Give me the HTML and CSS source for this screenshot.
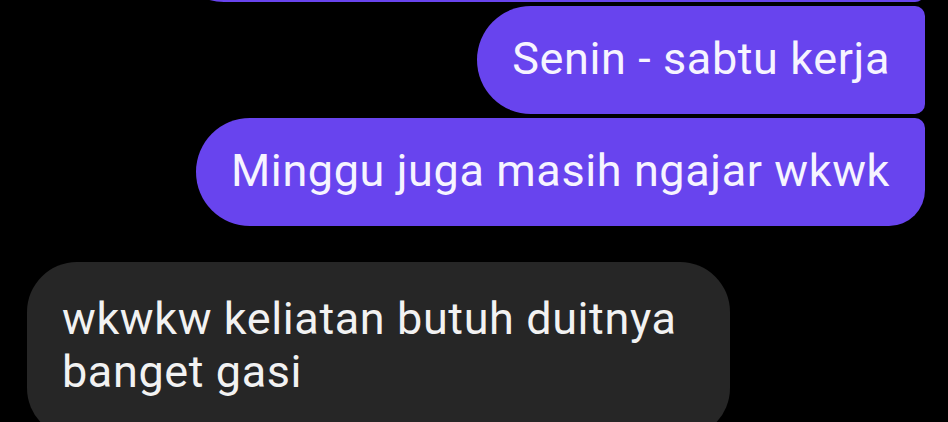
FILE: index.html
```html
<!DOCTYPE html>
<html lang="en">
<head>
  <meta charset="UTF-8">
  <title>Chat</title>
  <link rel="stylesheet" href="styles.css">
</head>
<body>
  <div class="chat">
    <div class="group sent">
      <div class="bubble cut"></div>
      <div class="bubble">Senin - sabtu kerja</div>
      <div class="bubble last">Minggu juga masih ngajar wkwk</div>
    </div>

    <div class="group received">
      <div class="bubble">wkwkw keliatan butuh duitnya<br>banget gasi</div>
    </div>
  </div>
</body>
</html>
```

FILE: styles.css
```css
body {
  margin: 0;
  background: #000;
  font-family: Roboto, "Noto Sans", sans-serif;
  overflow: hidden;
  height: 100vh;
}
.chat {
  display: flex;
  flex-direction: column;
  gap: 36px;
  padding: 0 23px 0 27px;
}
.group {
  display: flex;
  flex-direction: column;
  gap: 4px;
}
.sent { align-items: flex-end; }
.received { align-items: flex-start; }
.bubble {
  font-size: 45px;
  letter-spacing: 0.6px;
  line-height: 53px;
  color: #f6f4ff;
  padding: 26px 35px 29px;
}
.sent .bubble {
  background: #6844ee;
  border-radius: 54px 10px 10px 54px;
}
.sent .bubble.last { border-radius: 54px 10px 36px 54px; }
.sent .bubble.cut {
  width: 755px;
  box-sizing: border-box;
  height: 108px;
  margin-top: -106px;
  padding: 0;
}
.received .bubble {
  background: #262626;
  color: #f2f2f2;
  border-radius: 50px;
  padding: 30px 53px 40px 35px;
}
```
